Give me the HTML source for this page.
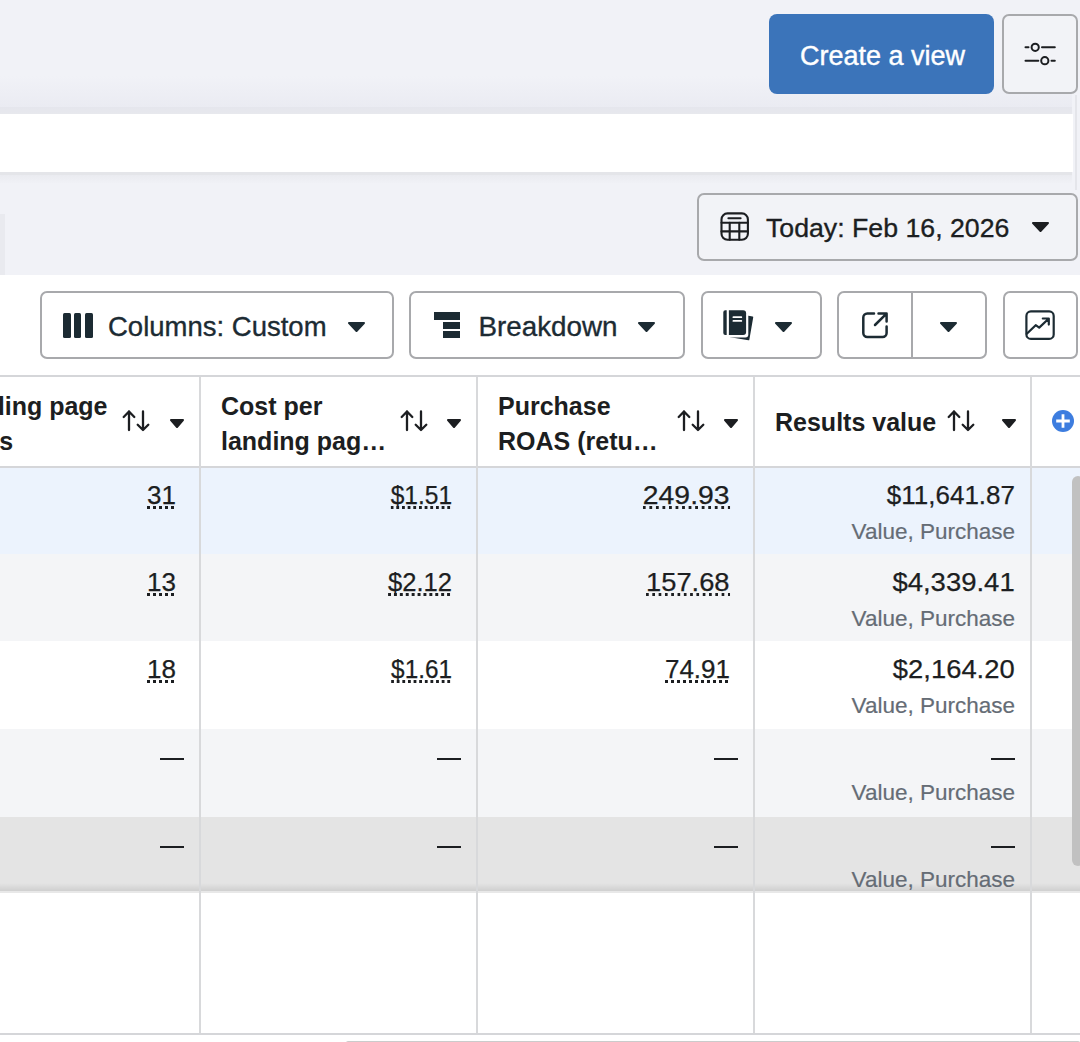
<!DOCTYPE html>
<html><head><meta charset="utf-8">
<style>
*{box-sizing:border-box;margin:0;padding:0}
html,body{width:1080px;height:1042px;overflow:hidden;background:#fff;font-family:"Liberation Sans",sans-serif;color:#1c2b33}
.abs{position:absolute}
.btn{position:absolute;border:2px solid #a8a9ac;border-radius:7px;background:#fff}
.t{position:absolute;white-space:nowrap;line-height:1}
.vline{position:absolute;width:2px;background:#d8d9db}
.hline{position:absolute;height:2px;background:#d5d6d9}
.row{position:absolute;left:0;width:1080px}
.num{position:absolute;white-space:nowrap;line-height:1;font-size:26px;color:#1c1e21;text-align:right;-webkit-text-stroke:0.25px #1c1e21}
.dot{background-image:linear-gradient(to right,#1c1e21 50%,transparent 50%);background-size:6px 3px;background-repeat:repeat-x;background-position:0 100%;padding-bottom:1px}
.sub{position:absolute;white-space:nowrap;line-height:1;font-size:22.5px;color:#656c75;text-align:right;-webkit-text-stroke:0.2px #656c75}
.hd{position:absolute;white-space:nowrap;font-weight:bold;font-size:25px;line-height:35px;color:#1c1e21}
</style></head><body>

<div class="abs" style="left:0;top:0;width:1080px;height:275px;background:#f1f2f7"></div>
<div class="abs" style="left:0;top:76px;width:1072px;height:32px;background:linear-gradient(#f1f2f7,#eaebf2)"></div>
<div class="abs" style="left:0;top:107px;width:1072px;height:7px;background:linear-gradient(#e5e6ed,#e7e8ed)"></div>
<div class="abs" style="left:1075px;top:95px;width:2px;height:95px;background:#e4e5ea"></div>
<div class="abs" style="left:0;top:114px;width:1073px;height:58px;background:#fff"></div>
<div class="abs" style="left:0;top:172px;width:1072px;height:3px;background:#e4e5e9"></div>
<div class="abs" style="left:0;top:175px;width:1072px;height:8px;background:linear-gradient(#eaebf0,#f0f1f6)"></div>
<div class="abs" style="left:769px;top:14px;width:225px;height:79.5px;background:#3b74ba;border-radius:8px"></div>
<div class="t" style="left:800px;top:42.5px;font-size:27px;color:#fff;-webkit-text-stroke:0.4px #fff">Create a view</div>
<div class="btn" style="left:1002px;top:14px;width:76px;height:80px;background:#f2f3f7"></div>
<svg class="abs" style="left:1020px;top:35px" width="40" height="32" viewBox="0 0 40 32"><g stroke="#1c1e21" stroke-width="2" fill="none" stroke-linecap="round">
<line x1="5.5" y1="12.3" x2="8.5" y2="12.3"/><circle cx="15.2" cy="12.3" r="3.6"/><line x1="22" y1="12.3" x2="34.8" y2="12.3"/>
<line x1="5.5" y1="25.7" x2="18.3" y2="25.7"/><circle cx="24.8" cy="25.7" r="3.6"/><line x1="31.5" y1="25.7" x2="34.8" y2="25.7"/>
</g></svg>
<div class="abs" style="left:0;top:214px;width:5px;height:61px;background:#e9eaef"></div>
<div class="btn" style="left:697px;top:193px;width:381px;height:68px;background:#f2f3f7"></div>
<svg class="abs" style="left:710px;top:205px" width="50" height="50" viewBox="0 0 50 50"><g stroke="#1c1e21" stroke-width="2.1" fill="none" stroke-linecap="round">
<rect x="11.5" y="8.4" width="26.4" height="26.3" rx="6"/>
<line x1="11.5" y1="17.8" x2="37.9" y2="17.8"/><line x1="18.4" y1="13.2" x2="30.6" y2="13.2"/>
<line x1="11.5" y1="26.4" x2="37.9" y2="26.4"/>
<line x1="19.7" y1="17.8" x2="19.7" y2="34.7"/><line x1="29.3" y1="17.8" x2="29.3" y2="34.7"/>
</g></svg>
<div class="t" style="left:766px;top:214.5px;font-size:26.7px;color:#1c1e21;-webkit-text-stroke:0.35px #1c1e21">Today: Feb 16, 2026</div>
<svg class="abs" style="left:1032px;top:222px" width="17" height="10" viewBox="0 0 17 10"><polygon points="1,1 16,1 8.5,9" fill="#1c1e21" stroke="#1c1e21" stroke-width="2" stroke-linejoin="round"/></svg>
<div class="btn" style="left:40px;top:291px;width:354px;height:68px"></div>
<div class="abs" style="left:63px;top:313px;width:8px;height:25px;background:#1c2b33;border-radius:1.5px"></div>
<div class="abs" style="left:74px;top:313px;width:7px;height:25px;background:#1c2b33;border-radius:1.5px"></div>
<div class="abs" style="left:85px;top:313px;width:8px;height:25px;background:#1c2b33;border-radius:1.5px"></div>
<div class="t" style="left:108px;top:312.5px;font-size:27.5px;color:#1c2b33;-webkit-text-stroke:0.35px #1c2b33">Columns: Custom</div>
<svg class="abs" style="left:348px;top:322px" width="17" height="10" viewBox="0 0 17 10"><polygon points="1,1 16,1 8.5,9" fill="#1c2b33" stroke="#1c2b33" stroke-width="2" stroke-linejoin="round"/></svg>
<div class="btn" style="left:409px;top:291px;width:276px;height:68px"></div>
<div class="abs" style="left:434px;top:312px;width:26px;height:8px;background:#1c2b33"></div>
<div class="abs" style="left:443px;top:322px;width:17px;height:7px;background:#1c2b33"></div>
<div class="abs" style="left:443px;top:331px;width:17px;height:7px;background:#1c2b33"></div>
<div class="t" style="left:478.5px;top:312.5px;font-size:27.8px;color:#1c2b33;-webkit-text-stroke:0.35px #1c2b33">Breakdown</div>
<svg class="abs" style="left:638px;top:322px" width="17" height="10" viewBox="0 0 17 10"><polygon points="1,1 16,1 8.5,9" fill="#1c2b33" stroke="#1c2b33" stroke-width="2" stroke-linejoin="round"/></svg>
<div class="btn" style="left:701px;top:291px;width:121px;height:68px"></div>
<svg class="abs" style="left:710px;top:300px" width="60" height="50" viewBox="0 0 60 50">
<path d="M24.4 14 L42.5 17.2 L38.6 39.5 L20.5 36.5 Z" fill="#1c2b33" stroke="#1c2b33" stroke-width="1.5" stroke-linejoin="round"/>
<rect x="16.7" y="8" width="21.6" height="29.5" rx="3" fill="#fff"/>
<path d="M15.3 10.3 h1.4 v24.7 h-1.4 a2 2 0 0 1 -2 -2 v-20.7 a2 2 0 0 1 2 -2z" fill="#1c2b33"/>
<path d="M18.9 10.3 h14.2 a3 3 0 0 1 3 3 v18.7 a3 3 0 0 1 -3 3 h-14.2z" fill="#1c2b33"/>
<rect x="22.5" y="16.3" width="9.7" height="1.8" rx="0.9" fill="#fff"/><rect x="22.5" y="20" width="9.7" height="1.8" rx="0.9" fill="#fff"/>
</svg>
<svg class="abs" style="left:775px;top:322px" width="17" height="10" viewBox="0 0 17 10"><polygon points="1,1 16,1 8.5,9" fill="#1c2b33" stroke="#1c2b33" stroke-width="2" stroke-linejoin="round"/></svg>
<div class="btn" style="left:837px;top:291px;width:150px;height:68px"></div>
<div class="abs" style="left:911px;top:293px;width:2px;height:64px;background:#a8a9ac"></div>
<svg class="abs" style="left:850px;top:300px" width="50" height="50" viewBox="0 0 50 50"><g stroke="#1c2b33" stroke-width="2.5" fill="none" stroke-linecap="round" stroke-linejoin="round">
<path d="M24 13.5 H17.3 a4 4 0 0 0 -4 4 V33.1 a4 4 0 0 0 4 4 H32.6 a4 4 0 0 0 4 -4 V26.5"/>
<path d="M28.5 13.5 H36.6 V21.5 M36 14.1 L25 25"/>
</g></svg>
<svg class="abs" style="left:940px;top:322px" width="17" height="10" viewBox="0 0 17 10"><polygon points="1,1 16,1 8.5,9" fill="#1c2b33" stroke="#1c2b33" stroke-width="2" stroke-linejoin="round"/></svg>
<div class="btn" style="left:1003px;top:291px;width:75px;height:68px"></div>
<svg class="abs" style="left:1015px;top:300px" width="50" height="50" viewBox="0 0 50 50"><g stroke="#1c2b33" stroke-width="2.2" fill="none" stroke-linecap="round" stroke-linejoin="round">
<rect x="11.4" y="11.4" width="27.3" height="27.5" rx="4.5"/>
<path d="M11.8 33.8 L20.7 25.2 L24.2 27.6 L33.6 18.7 M27.8 18.5 H33.8 V24.6"/>
</g></svg>
<div class="hline" style="left:0;top:375px;width:1080px"></div>
<div class="hline" style="left:0;top:466px;width:1080px"></div>
<div class="abs" style="left:0;top:468px;width:1080px;height:423px;overflow:hidden">
<div class="row" style="top:0px;height:86px;background:#ecf3fd"></div>
<div class="row" style="top:86px;height:87px;background:#f4f5f7"></div>
<div class="row" style="top:173px;height:88px;background:#ffffff"></div>
<div class="row" style="top:261px;height:88px;background:#f4f5f7"></div>
<div class="row" style="top:349px;height:80px;background:#e4e4e4"></div>
<div class="row" style="top:415px;height:8px;background:linear-gradient(rgba(0,0,0,0),rgba(0,0,0,0.09))"></div>
<div class="num dot" style="right:904px;top:14.4px;transform:scaleX(1.0);transform-origin:100% 50%">31</div>
<div class="num dot" style="right:628px;top:14.4px;transform:scaleX(0.944);transform-origin:100% 50%">$1.51</div>
<div class="num dot" style="right:350px;top:14.4px;transform:scaleX(1.09);transform-origin:100% 50%">249.93</div>
<div class="num" style="right:65px;top:14.4px;transform:scaleX(1.0);transform-origin:100% 50%">$11,641.87</div>
<div class="sub" style="right:65px;top:52.5px">Value, Purchase</div>
<div class="num dot" style="right:904px;top:101.4px;transform:scaleX(1.0);transform-origin:100% 50%">13</div>
<div class="num dot" style="right:628px;top:101.4px;transform:scaleX(0.984);transform-origin:100% 50%">$2.12</div>
<div class="num dot" style="right:350px;top:101.4px;transform:scaleX(1.05);transform-origin:100% 50%">157.68</div>
<div class="num" style="right:65px;top:101.4px;transform:scaleX(1.057);transform-origin:100% 50%">$4,339.41</div>
<div class="sub" style="right:65px;top:139.5px">Value, Purchase</div>
<div class="num dot" style="right:904px;top:188.4px;transform:scaleX(1.0);transform-origin:100% 50%">18</div>
<div class="num dot" style="right:628px;top:188.4px;transform:scaleX(0.937);transform-origin:100% 50%">$1.61</div>
<div class="num dot" style="right:350px;top:188.4px;transform:scaleX(1.0);transform-origin:100% 50%">74.91</div>
<div class="num" style="right:65px;top:188.4px;transform:scaleX(1.053);transform-origin:100% 50%">$2,164.20</div>
<div class="sub" style="right:65px;top:226.5px">Value, Purchase</div>
<div class="abs" style="left:160px;top:290.0px;width:24px;height:2.4px;background:#1c1e21"></div>
<div class="abs" style="left:437px;top:290.0px;width:24px;height:2.4px;background:#1c1e21"></div>
<div class="abs" style="left:714px;top:290.0px;width:24px;height:2.4px;background:#1c1e21"></div>
<div class="abs" style="left:991px;top:290.0px;width:24px;height:2.4px;background:#1c1e21"></div>
<div class="sub" style="right:65px;top:313.5px">Value, Purchase</div>
<div class="abs" style="left:160px;top:377.5px;width:24px;height:2.4px;background:#1c1e21"></div>
<div class="abs" style="left:437px;top:377.5px;width:24px;height:2.4px;background:#1c1e21"></div>
<div class="abs" style="left:714px;top:377.5px;width:24px;height:2.4px;background:#1c1e21"></div>
<div class="abs" style="left:991px;top:377.5px;width:24px;height:2.4px;background:#1c1e21"></div>
<div class="sub" style="right:65px;top:401.0px">Value, Purchase</div>
</div>
<div class="abs" style="left:0;top:891px;width:1080px;height:2px;background:#e8e8e8"></div>
<div class="vline" style="left:199px;top:377px;height:657px"></div>
<div class="vline" style="left:476px;top:377px;height:657px"></div>
<div class="vline" style="left:753px;top:377px;height:657px"></div>
<div class="vline" style="left:1030px;top:377px;height:657px"></div>
<div class="hline" style="left:0;top:1033px;width:1080px"></div>
<div class="abs" style="left:346px;top:1041px;width:734px;height:4px;background:#cbcbcb;border-radius:2px"></div>
<div class="abs" style="left:0;top:377px;width:199px;height:89px;overflow:hidden"><div class="hd" style="left:-55px;top:12px">Landing page<br>views</div></div>
<div class="hd" style="left:221px;top:389px">Cost per<br>landing pag…</div>
<div class="hd" style="left:498px;top:389px">Purchase<br>ROAS (retu…</div>
<div class="hd" style="left:775px;top:405px">Results value</div>
<svg class="abs" style="left:121.4px;top:400px" width="32" height="40" viewBox="0 0 32 40"><g stroke="#1c1e21" stroke-width="2.3" fill="none" stroke-linecap="round" stroke-linejoin="round"><path d="M8 30 V11.5 M2.7 17 L8 11.5 L13.3 17"/><path d="M22 11.5 V30 M16.7 24.7 L22 30 L27.3 24.7"/></g></svg>
<svg class="abs" style="left:170px;top:419px" width="14" height="9" viewBox="0 0 14 9"><polygon points="1,1 13,1 7.0,8" fill="#1c1e21" stroke="#1c1e21" stroke-width="2" stroke-linejoin="round"/></svg>
<svg class="abs" style="left:398.7px;top:400px" width="32" height="40" viewBox="0 0 32 40"><g stroke="#1c1e21" stroke-width="2.3" fill="none" stroke-linecap="round" stroke-linejoin="round"><path d="M8 30 V11.5 M2.7 17 L8 11.5 L13.3 17"/><path d="M22 11.5 V30 M16.7 24.7 L22 30 L27.3 24.7"/></g></svg>
<svg class="abs" style="left:447px;top:419px" width="14" height="9" viewBox="0 0 14 9"><polygon points="1,1 13,1 7.0,8" fill="#1c1e21" stroke="#1c1e21" stroke-width="2" stroke-linejoin="round"/></svg>
<svg class="abs" style="left:675.9px;top:400px" width="32" height="40" viewBox="0 0 32 40"><g stroke="#1c1e21" stroke-width="2.3" fill="none" stroke-linecap="round" stroke-linejoin="round"><path d="M8 30 V11.5 M2.7 17 L8 11.5 L13.3 17"/><path d="M22 11.5 V30 M16.7 24.7 L22 30 L27.3 24.7"/></g></svg>
<svg class="abs" style="left:724px;top:419px" width="14" height="9" viewBox="0 0 14 9"><polygon points="1,1 13,1 7.0,8" fill="#1c1e21" stroke="#1c1e21" stroke-width="2" stroke-linejoin="round"/></svg>
<svg class="abs" style="left:946.1px;top:400px" width="32" height="40" viewBox="0 0 32 40"><g stroke="#1c1e21" stroke-width="2.3" fill="none" stroke-linecap="round" stroke-linejoin="round"><path d="M8 30 V11.5 M2.7 17 L8 11.5 L13.3 17"/><path d="M22 11.5 V30 M16.7 24.7 L22 30 L27.3 24.7"/></g></svg>
<svg class="abs" style="left:1001.5px;top:419px" width="14" height="9" viewBox="0 0 14 9"><polygon points="1,1 13,1 7.0,8" fill="#1c1e21" stroke="#1c1e21" stroke-width="2" stroke-linejoin="round"/></svg>
<svg class="abs" style="left:1051px;top:409px" width="24" height="24" viewBox="0 0 24 24"><circle cx="12" cy="12" r="11" fill="#3d7ddf"/><path d="M12 5.2 v13.6 M5.2 12 h13.6" stroke="#fff" stroke-width="2.8"/></svg>
<div class="abs" style="left:1072px;top:476px;width:12px;height:390px;background:#c1c1c1;border-radius:7px"></div>
</body></html>
